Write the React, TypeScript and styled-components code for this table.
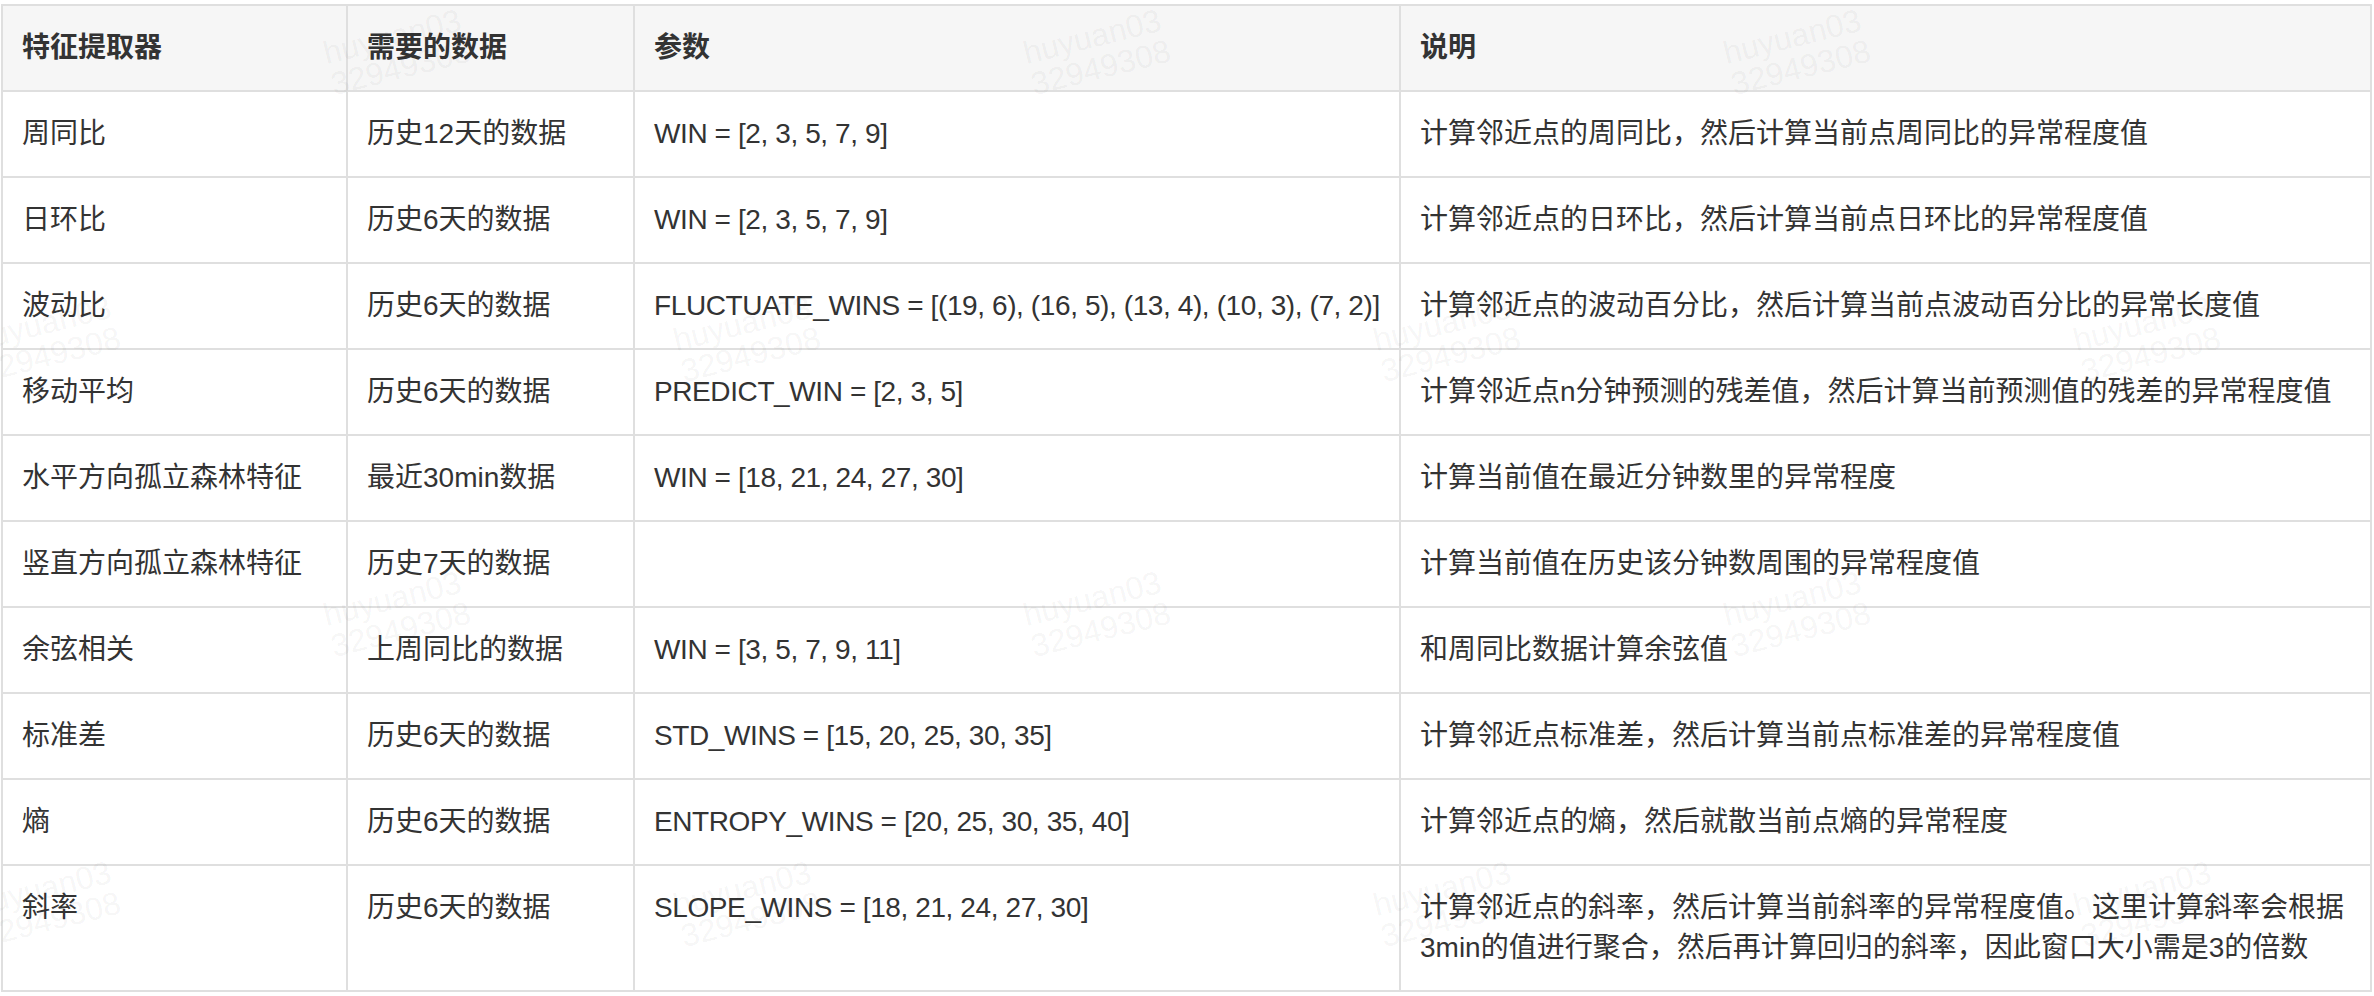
import React from "react";
import styled, { createGlobalStyle } from "styled-components";

const GlobalStyle = createGlobalStyle`
  html, body {
    margin: 0;
    padding: 0;
    background: #ffffff;
  }
  body {
    font-family: "Liberation Sans", "Noto Sans CJK SC", sans-serif;
    color: #333333;
  }
`;

const Page = styled.div`
  position: relative;
  padding: 4px 0 0 1px;
  width: 2374px;
  height: 996px;
  box-sizing: border-box;
  overflow: hidden;
`;

const Table = styled.table`
  width: 2369px;
  border-collapse: collapse;
  table-layout: fixed;
  font-size: 28px;
  line-height: 40px;
`;

const HeadCell = styled.th`
  border: 2px solid #dfdfdf;
  background: #f6f6f6;
  padding: 22px 19px;
  text-align: left;
  font-weight: 700;
  color: #333333;
  vertical-align: top;
`;

const Cell = styled.td<{ $code?: boolean }>`
  border: 2px solid #dfdfdf;
  padding: 22px 19px;
  text-align: left;
  font-weight: 400;
  color: #333333;
  vertical-align: top;
  white-space: ${(p) => (p.$code ? "nowrap" : "normal")};
  letter-spacing: ${(p) => (p.$code ? "-0.4px" : "0")};
`;

const Watermarks = styled.div`
  position: absolute;
  inset: 0;
  pointer-events: none;
`;

const Mark = styled.div<{ $x: number; $y: number }>`
  position: absolute;
  left: ${(p) => p.$x}px;
  top: ${(p) => p.$y}px;
  transform: rotate(-14deg);
  transform-origin: left top;
  font-family: "Liberation Sans", sans-serif;
  font-size: 32px;
  line-height: 32px;
  color: rgba(0, 0, 0, 0.05);
  white-space: nowrap;
`;

const columns = [
  { title: "特征提取器", width: 345 },
  { title: "需要的数据", width: 287 },
  { title: "参数", width: 766 },
  { title: "说明", width: 971 },
];

const rows: string[][] = [
  ["周同比", "历史12天的数据", "WIN = [2, 3, 5, 7, 9]", "计算邻近点的周同比，然后计算当前点周同比的异常程度值"],
  ["日环比", "历史6天的数据", "WIN = [2, 3, 5, 7, 9]", "计算邻近点的日环比，然后计算当前点日环比的异常程度值"],
  [
    "波动比",
    "历史6天的数据",
    "FLUCTUATE_WINS = [(19, 6), (16, 5), (13, 4), (10, 3), (7, 2)]",
    "计算邻近点的波动百分比，然后计算当前点波动百分比的异常长度值",
  ],
  ["移动平均", "历史6天的数据", "PREDICT_WIN = [2, 3, 5]", "计算邻近点n分钟预测的残差值，然后计算当前预测值的残差的异常程度值"],
  ["水平方向孤立森林特征", "最近30min数据", "WIN = [18, 21, 24, 27, 30]", "计算当前值在最近分钟数里的异常程度"],
  ["竖直方向孤立森林特征", "历史7天的数据", "", "计算当前值在历史该分钟数周围的异常程度值"],
  ["余弦相关", "上周同比的数据", "WIN = [3, 5, 7, 9, 11]", "和周同比数据计算余弦值"],
  ["标准差", "历史6天的数据", "STD_WINS = [15, 20, 25, 30, 35]", "计算邻近点标准差，然后计算当前点标准差的异常程度值"],
  ["熵", "历史6天的数据", "ENTROPY_WINS = [20, 25, 30, 35, 40]", "计算邻近点的熵，然后就散当前点熵的异常程度"],
  [
    "斜率",
    "历史6天的数据",
    "SLOPE_WINS = [18, 21, 24, 27, 30]",
    "计算邻近点的斜率，然后计算当前斜率的异常程度值。这里计算斜率会根据3min的值进行聚合，然后再计算回归的斜率，因此窗口大小需是3的倍数",
  ],
];

// staggered watermark grid
const marks: [number, number][] = [
  [320, 38],
  [1020, 38],
  [1720, 38],
  [-30, 325],
  [670, 325],
  [1370, 325],
  [2070, 325],
  [320, 600],
  [1020, 600],
  [1720, 600],
  [-30, 890],
  [670, 890],
  [1370, 890],
  [2070, 890],
];

export default function App() {
  return (
    <>
      <GlobalStyle />
      <Page>
        <Table>
          <colgroup>
            {columns.map((c) => (
              <col key={c.title} style={{ width: c.width }} />
            ))}
          </colgroup>
          <thead>
            <tr>
              {columns.map((c) => (
                <HeadCell key={c.title}>{c.title}</HeadCell>
              ))}
            </tr>
          </thead>
          <tbody>
            {rows.map((r) => (
              <tr key={r[0]}>
                {r.map((v, i) => (
                  <Cell key={i} $code={i === 2}>
                    {v}
                  </Cell>
                ))}
              </tr>
            ))}
          </tbody>
        </Table>
        <Watermarks>
          {marks.map(([x, y]) => (
            <Mark key={`${x}-${y}`} $x={x} $y={y}>
              huyuan03
              <br />
              32949308
            </Mark>
          ))}
        </Watermarks>
      </Page>
    </>
  );
}
